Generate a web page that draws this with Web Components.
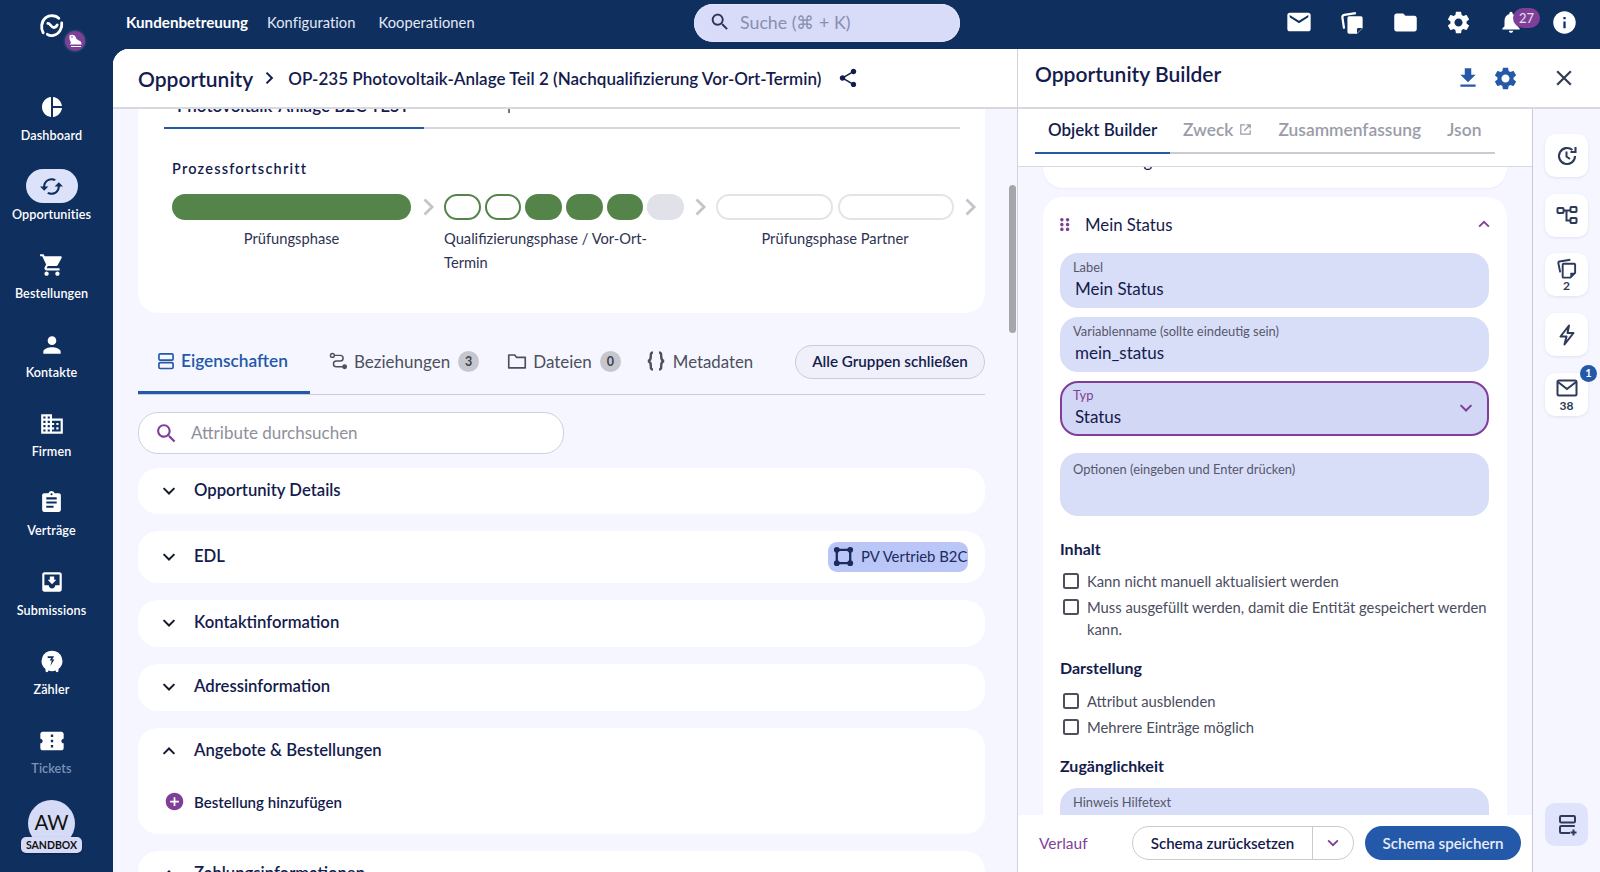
<!DOCTYPE html>
<html lang="de"><head><meta charset="utf-8"><title>Opportunity Builder</title>
<style>
html,body{margin:0;height:872px;overflow:hidden;background:#0f2f5f}
body{font-family:"Lato","Liberation Sans",sans-serif;color:#141b4d;-webkit-font-smoothing:antialiased}
</style></head><body>
<app-shell></app-shell>
<script>
const P={
mail:'M20 4H4c-1.1 0-1.99.9-1.99 2L2 18c0 1.1.9 2 2 2h16c1.1 0 2-.9 2-2V6c0-1.1-.9-2-2-2zm0 4l-8 5-8-5V6l8 5 8-5v2z',
folder:'M10 4H4c-1.1 0-1.99.9-1.99 2L2 18c0 1.1.9 2 2 2h16c1.1 0 2-.9 2-2V8c0-1.1-.9-2-2-2h-8l-2-2z',
gear:'M19.14 12.94c.04-.3.06-.61.06-.94 0-.32-.02-.64-.07-.94l2.03-1.58c.18-.14.23-.41.12-.61l-1.92-3.32c-.12-.22-.37-.29-.59-.22l-2.39.96c-.5-.38-1.03-.7-1.62-.94l-.36-2.54c-.04-.24-.24-.41-.48-.41h-3.84c-.24 0-.43.17-.47.41l-.36 2.54c-.59.24-1.13.57-1.62.94l-2.39-.96c-.22-.08-.47 0-.59.22L2.74 8.87c-.12.21-.08.47.12.61l2.03 1.58c-.05.3-.09.63-.09.94s.02.64.07.94l-2.03 1.58c-.18.14-.23.41-.12.61l1.92 3.32c.12.22.37.29.59.22l2.39-.96c.5.38 1.03.7 1.62.94l.36 2.54c.05.24.24.41.48.41h3.84c.24 0 .44-.17.47-.41l.36-2.54c.59-.24 1.13-.56 1.62-.94l2.39.96c.22.08.47 0 .59-.22l1.92-3.32c.12-.22.07-.47-.12-.61l-2.01-1.58zM12 15.6c-1.98 0-3.6-1.62-3.6-3.6s1.62-3.6 3.6-3.6 3.6 1.62 3.6 3.6-1.62 3.6-3.6 3.6z',
bell:'M12 22c1.1 0 2-.9 2-2h-4c0 1.1.89 2 2 2zm6-6v-5c0-3.07-1.64-5.64-4.5-6.32V4c0-.83-.67-1.5-1.5-1.5s-1.5.67-1.5 1.5v.68C7.63 5.36 6 7.92 6 11v5l-2 2v1h16v-1l-2-2z',
info:'M12 2C6.48 2 2 6.48 2 12s4.48 10 10 10 10-4.48 10-10S17.52 2 12 2zm1 15h-2v-6h2v6zm0-8h-2V7h2v2z',
search:'M15.5 14h-.79l-.28-.27C15.41 12.59 16 11.11 16 9.5 16 5.91 13.09 3 9.5 3S3 5.91 3 9.5 5.91 16 9.5 16c1.61 0 3.09-.59 4.23-1.57l.27.28v.79l5 4.99L20.49 19l-4.99-5zm-6 0C7.01 14 5 11.99 5 9.5S7.01 5 9.5 5 14 7.01 14 9.5 11.99 14 9.5 14z',
cart:'M7 18c-1.1 0-1.99.9-1.99 2S5.9 22 7 22s2-.9 2-2-.9-2-2-2zM1 2v2h2l3.6 7.59-1.35 2.45c-.16.28-.25.61-.25.96 0 1.1.9 2 2 2h12v-2H7.42c-.14 0-.25-.11-.25-.25l.03-.12.9-1.63h7.45c.75 0 1.41-.41 1.75-1.03l3.58-6.49c.08-.14.12-.31.12-.48 0-.55-.45-1-1-1H5.21l-.94-2H1zm16 16c-1.1 0-1.99.9-1.99 2s.89 2 1.99 2 2-.9 2-2-.9-2-2-2z',
person:'M12 12c2.21 0 4-1.79 4-4s-1.79-4-4-4-4 1.79-4 4 1.79 4 4 4zm0 2c-2.67 0-8 1.34-8 4v2h16v-2c0-2.66-5.33-4-8-4z',
domain:'M12 7V3H2v18h20V7H12zM6 19H4v-2h2v2zm0-4H4v-2h2v2zm0-4H4V9h2v2zm0-4H4V5h2v2zm4 12H8v-2h2v2zm0-4H8v-2h2v2zm0-4H8V9h2v2zm0-4H8V5h2v2zm10 12h-8v-2h2v-2h-2v-2h2v-2h-2V9h8v10zm-2-8h-2v2h2v-2zm0 4h-2v2h2v-2z',
assign:'M19 3h-4.18C14.4 1.84 13.3 1 12 1c-1.3 0-2.4.84-2.82 2H5c-1.1 0-2 .9-2 2v14c0 1.1.9 2 2 2h14c1.1 0 2-.9 2-2V5c0-1.1-.9-2-2-2zm-7 0c.55 0 1 .45 1 1s-.45 1-1 1-1-.45-1-1 .45-1 1-1zm2 14H7v-2h7v2zm3-4H7v-2h10v2zm0-4H7V7h10v2z',
inbox:'M19 3H4.99c-1.11 0-1.98.89-1.98 2L3 19c0 1.1.88 2 1.99 2H19c1.1 0 2-.9 2-2V5c0-1.11-.9-2-2-2zm0 12h-4c0 1.66-1.35 3-3 3s-3-1.34-3-3H4.99V5H19v10zm-3-5h-2V7h-4v3H8l4 4 4-4z',
ticket:'M22 10V6c0-1.11-.9-2-2-2H4c-1.1 0-1.99.89-1.99 2v4c1.1 0 1.99.9 1.99 2s-.89 2-2 2v4c0 1.1.9 2 2 2h16c1.1 0 2-.9 2-2v-4c-1.1 0-2-.9-2-2s.9-2 2-2zm-9 7.5h-2v-2h2v2zm0-4.5h-2v-2h2v2zm0-4.5h-2v-2h2v2z',
cached:'M19 8l-4 4h3c0 3.31-2.69 6-6 6-1.01 0-1.97-.25-2.8-.7l-1.46 1.46C8.97 19.54 10.43 20 12 20c4.42 0 8-3.58 8-8h3l-4-4zM6 12c0-3.31 2.69-6 6-6 1.01 0 1.97.25 2.8.7l1.46-1.46C15.03 4.46 13.57 4 12 4c-4.42 0-8 3.58-8 8H1l4 4 4-4H6z',
download:'M19 9h-4V3H9v6H5l7 7 7-7zM5 18v2h14v-2H5z',
close:'M19 6.41L17.59 5 12 10.59 6.41 5 5 6.41 10.59 12 5 17.59 6.41 19 12 13.41 17.59 19 19 17.59 13.41 12 19 6.41z',
share:'M18 16.08c-.76 0-1.44.3-1.96.77L8.91 12.7c.05-.23.09-.46.09-.7s-.04-.47-.09-.7l7.05-4.11c.54.5 1.25.81 2.04.81 1.66 0 3-1.34 3-3s-1.34-3-3-3-3 1.34-3 3c0 .24.04.47.09.7L8.04 9.81C7.5 9.31 6.79 9 6 9c-1.66 0-3 1.34-3 3s1.34 3 3 3c.79 0 1.5-.31 2.04-.81l7.12 4.16c-.05.21-.08.43-.08.65 0 1.61 1.31 2.92 2.92 2.92 1.61 0 2.92-1.31 2.92-2.92s-1.31-2.92-2.92-2.92z',
dashboard:'M11 2.05V21.95C5.9 21.45 2 17.2 2 12S5.9 2.55 11 2.05zM13 2.05C17.7 2.5 21.5 6.3 21.95 11H13V2.05zM13 13h8.95c-.45 4.7-4.25 8.5-8.95 8.95V13z',
plusc:'M12 2C6.48 2 2 6.48 2 12s4.48 10 10 10 10-4.48 10-10S17.52 2 12 2zm5 11h-4v4h-2v-4H7v-2h4V7h2v4h4v2z',
drag:'M9 4.5a2 2 0 1 1-.01 0zM15.5 4.5a2 2 0 1 1-.01 0zM9 10a2 2 0 1 1-.01 0zM15.5 10a2 2 0 1 1-.01 0zM9 15.5a2 2 0 1 1-.01 0zM15.5 15.5a2 2 0 1 1-.01 0z',
counter:'M12 2.5a9.5 9.5 0 0 1 6 16.9V21a1.3 1.3 0 0 1-2.6 0v-.2a9.6 9.6 0 0 1-6.8 0v.2A1.3 1.3 0 0 1 6 21v-1.6A9.5 9.5 0 0 1 12 2.5zM8 7.5v1.8h3.2L9.8 11.5h2l-1.3 5 3.7-6h-2l1.7-3z'
};
const S={
copyfill:'<path d="M4.5 17.5 3 7.5a2 2 0 0 1 1.7-2.3L15 3.6" fill="none" stroke="currentColor" stroke-width="2"/><path d="M9 6.5h10.5a1.5 1.5 0 0 1 1.5 1.5v9l-5 5H9a1.5 1.5 0 0 1-1.5-1.5V8A1.5 1.5 0 0 1 9 6.5z" fill="currentColor"/><path d="M16 21.5v-3.4a1.2 1.2 0 0 1 1.2-1.2h3.6z" fill="#0f2f5f"/>',
relation:'<circle cx="5" cy="5" r="2.2" fill="none" stroke="currentColor" stroke-width="1.6"/><path d="M7.2 5H14a3.2 3.2 0 0 1 0 6.5H9.5a3.2 3.2 0 0 0 0 6.5H17" fill="none" stroke="currentColor" stroke-width="1.7"/><circle cx="19" cy="18" r="2.8" fill="currentColor"/>',
rows:'<rect x="3.5" y="3.5" width="17" height="7.5" rx="1.5" fill="none" stroke="currentColor" stroke-width="2"/><rect x="3.5" y="14" width="17" height="7" rx="1.5" fill="none" stroke="currentColor" stroke-width="2"/>',
ofolder:'<path d="M3 5.5h6.5l2 2.500H21v11.500H3z" fill="none" stroke="currentColor" stroke-width="1.8" stroke-linejoin="round"/>',
braces:'<path d="M9 3.5C6.6 3.5 6.8 5 6.8 7.5c0 2.5-.3 4-2.8 4.5 2.5.5 2.8 2 2.8 4.5 0 2.5-.2 4 2.2 4M15 3.5c2.4 0 2.2 1.5 2.2 4 0 2.5.3 4 2.8 4.5-2.5.5-2.8 2-2.8 4.5 0 2.5.2 4-2.2 4" fill="none" stroke="currentColor" stroke-width="2.4"/>',
nodes:'<path d="M5 5h14M5 19h14M5 5v14M19 5v14" fill="none" stroke="currentColor" stroke-width="2.4"/><circle cx="5" cy="5" r="3" fill="currentColor"/><circle cx="19" cy="5" r="3" fill="currentColor"/><circle cx="5" cy="19" r="3" fill="currentColor"/><circle cx="19" cy="19" r="3" fill="currentColor"/>',
external:'<path d="M11 4.5H4.5v15h15V13M13.5 4.5h6v6M19.5 4.5 10 14" fill="none" stroke="currentColor" stroke-width="2"/>',
history:'<path d="M20 12a8 8 0 1 1-2.6-5.900" fill="none" stroke="currentColor" stroke-width="2.1"/><path d="M20.5 3v5h-5" fill="none" stroke="currentColor" stroke-width="2.1"/><path d="M11.5 7.500v5l3.500 2.500" fill="none" stroke="currentColor" stroke-width="2"/>',
tree:'<rect x="2.5" y="5" width="6" height="5" rx=".8" fill="none" stroke="currentColor" stroke-width="2"/><rect x="15.5" y="4" width="6" height="5" rx=".8" fill="none" stroke="currentColor" stroke-width="2"/><rect x="15.5" y="15" width="6" height="5" rx=".8" fill="none" stroke="currentColor" stroke-width="2"/><path d="M8.5 7.500h7M11.500 7.500v10h4" fill="none" stroke="currentColor" stroke-width="2"/>',
copyo:'<path d="M5.5 16 3.5 6.500a1.500 1.500 0 0 1 1.200-1.800L16 2.800" fill="none" stroke="currentColor" stroke-width="2"/><path d="M9 7h11a1 1 0 0 1 1 1v8.500L16 21.500H9a1 1 0 0 1-1-1V8a1 1 0 0 1 1-1z" fill="none" stroke="currentColor" stroke-width="2"/><path d="M16 21.500V17a.6.6 0 0 1 .6-.6H21z" fill="currentColor"/>',
bolt:'<path d="M14 2.500 5.500 13.500h6L9.500 21.500l9-11.500h-6z" fill="none" stroke="currentColor" stroke-width="2" stroke-linejoin="round"/>',
omail:'<rect x="2.5" y="4.5" width="19" height="15" rx="1.500" fill="none" stroke="currentColor" stroke-width="2"/><path d="M3 6l9 7 9-7" fill="none" stroke="currentColor" stroke-width="2"/>',
addrow:'<rect x="5" y="3" width="15" height="6.500" rx="1.200" fill="none" stroke="currentColor" stroke-width="2"/><path d="M19.800 13H6.200A1.200 1.200 0 0 0 5 14.200v4.600A1.200 1.200 0 0 0 6.200 20H15M18.500 16.500v6M15.500 19.500h6" fill="none" stroke="currentColor" stroke-width="2"/>',
down:'<path d="M5.500 8.500 12 15l6.500-6.500" fill="none" stroke="currentColor" stroke-width="2.4"/>',
up:'<path d="M5.500 15.500 12 9l6.500 6.500" fill="none" stroke="currentColor" stroke-width="2.4"/>',
right:'<path d="M9 5.500 15.500 12 9 18.500" fill="none" stroke="currentColor" stroke-width="2.4"/>',
logo:'<g fill="none" stroke="currentColor" stroke-width="2.7" stroke-linecap="round"><path d="M4 19C1.500 15 2 8 6.500 4.500 10 1.800 16 2 19 5"/><path d="M21.800 9.500c.8 5-2.300 10.800-8 12-2.200.5-4.300 0-5.800-1"/><path d="M8.500 10c2.200 0 2.600 2.500 4.500 3.500 1.800.8 3.600-.2 4.500-2"/></g>'
};
function def(name,css,html,extra){
  const tpl=document.createElement('template');
  tpl.innerHTML='<style>'+css+'</style>'+html;
  customElements.define(name,class extends HTMLElement{
    constructor(){super();this.attachShadow({mode:'open'}).appendChild(tpl.content.cloneNode(true));}
    connectedCallback(){if(extra)extra.call(this,this.shadowRoot);}
  });
}
def('x-icon',':host{display:inline-flex;flex:none;line-height:0}svg{display:block;overflow:visible}','<svg viewBox="0 0 24 24"></svg>',function(r){
  const n=this.getAttribute('name'),s=this.getAttribute('size')||24,v=r.querySelector('svg');
  v.setAttribute('width',s);v.setAttribute('height',s);
  v.innerHTML=P[n]?'<path fill="currentColor" d="'+P[n]+'"/>':(S[n]||'');
});
def('nav-item',`:host{display:flex;flex-direction:column;align-items:center;height:79.2px;width:103px;color:#fff;box-sizing:border-box;flex:none}
.i{width:52px;height:34px;display:flex;align-items:center;justify-content:center;border-radius:17px}
.l{font-size:12.600px;line-height:16px;font-weight:600;margin-top:3.500px;letter-spacing:.1px;white-space:nowrap}
:host([active]) .i{background:#dbe2fa;color:#0f2f5f}
:host([dim]) .l{color:#7d93b5}`,`<div class="i"><slot></slot></div><div class="l"></div>`,function(r){r.querySelector('.l').textContent=this.getAttribute('label');});
def('side-nav',`:host{display:flex;flex-direction:column;align-items:flex-start;grid-row:1/3;background:#0f2f5f;width:113px}
.logo{position:relative;height:49px;width:103px;color:#fff;margin-top:13px;margin-bottom:28px;flex:none}
.logo x-icon{margin-left:39px}
.logo .b{position:absolute;left:65px;top:18px;width:20px;height:20px;border-radius:50%;background:#7f3f98;box-shadow:0 0 3px rgba(255,255,255,.3)}
.logo svg{display:block}
.av{margin:-3px 0 0 28px;position:relative;width:47px;height:47px;border-radius:50%;background:#d5dbf7;color:#111;font-size:20.500px;display:flex;align-items:center;justify-content:center;padding-bottom:3px;box-sizing:border-box;flex:none}
.sb{position:absolute;left:-7px;top:37px;width:61px;height:16px;border-radius:5px;background:#d5dbf7;color:#111;font-size:10.500px;font-weight:700;display:flex;align-items:center;justify-content:center;box-shadow:0 1px 2px rgba(0,0,0,.3)}`,
`<div class="logo"><x-icon name="logo" size="25"></x-icon><div class="b"><svg viewBox="0 0 20 20" width="20" height="20"><path d="M4.500 4.500c2.200-1.500 5-1 6 1.200l1 2.300 4.500 2.800.5 2.700H4.500l1.500-1.500L4.500 8z" fill="#fff"/><circle cx="7" cy="6" r=".8" fill="#7f3f98"/><path d="M6 15.500h10" stroke="#fff" stroke-width="1"/></svg></div></div>
<nav-item label="Dashboard"><x-icon name="dashboard" size="24"></x-icon></nav-item>
<nav-item label="Opportunities" active><x-icon name="cached" size="25"></x-icon></nav-item>
<nav-item label="Bestellungen"><x-icon name="cart" size="26"></x-icon></nav-item>
<nav-item label="Kontakte"><x-icon name="person" size="26"></x-icon></nav-item>
<nav-item label="Firmen"><x-icon name="domain" size="26"></x-icon></nav-item>
<nav-item label="Verträge"><x-icon name="assign" size="25"></x-icon></nav-item>
<nav-item label="Submissions"><x-icon name="inbox" size="26"></x-icon></nav-item>
<nav-item label="Zähler"><x-icon name="counter" size="26"></x-icon></nav-item>
<nav-item label="Tickets" dim><x-icon name="ticket" size="28"></x-icon></nav-item>
<div class="av">AW<div class="sb">SANDBOX</div></div>`);
def('top-bar',`:host{display:flex;align-items:center;height:49px;background:#0f2f5f;color:#fff;padding:0 24px 5px 0;box-sizing:border-box}
.nav{display:flex;align-items:center;width:581px;padding-left:13px;box-sizing:border-box;font-size:14.700px}
.nav b{font-weight:700;width:141px;font-size:15.200px}.nav span{color:#e4e8f5;letter-spacing:.05px}.nav span:nth-child(2){width:111.500px}
.s{width:266px;height:38px;margin-top:1px;border-radius:19px;background:#d8dcf8;display:flex;align-items:center;padding:0 0 1px 15px;box-sizing:border-box;color:#8a8eb0;font-size:17.800px;gap:9px;box-shadow:0 0 0 1px #dfe3fb inset}
.s x-icon{color:#2b3257}
.r{margin-left:auto;display:flex;gap:29px;align-items:center}
.bell{position:relative;display:flex}
.badge{position:absolute;left:14px;top:-1px;width:27px;height:20px;border-radius:10px;background:#7f3f98;color:#e8e0f0;font-size:13px;display:flex;align-items:center;justify-content:center}`,
`<div class="nav"><b>Kundenbetreuung</b><span>Konfiguration</span><span>Kooperationen</span></div>
<div class="s"><x-icon name="search" size="22"></x-icon><span>Suche (⌘ + K)</span></div>
<div class="r"><x-icon name="mail" size="28" style="margin:0 -2px"></x-icon><x-icon name="copyfill" size="27" style="margin:0 -1.500px"></x-icon><x-icon name="folder" size="27" style="margin:0 -1.500px"></x-icon><x-icon name="gear" size="27" style="margin:0 -1.500px"></x-icon><div class="bell"><x-icon name="bell" size="26" style="margin:0 -1px"></x-icon><div class="badge">27</div></div><x-icon name="info" size="27" style="margin:0 -1.500px"></x-icon></div>`);
def('x-accordion',`:host{display:block;background:#fff;border-radius:20px;box-sizing:border-box;flex:none}
.h{display:flex;align-items:center;height:var(--hh,46px);padding:0 17px 0 21px;font-size:16.700px;font-weight:600;color:#141b4d}
.h x-icon{margin-right:15px;color:#141b2d}.t{flex:1;padding-bottom:2px}`,
`<div class="h"><div class="t"></div><slot name="aside"></slot></div><slot></slot>`,function(r){
  const ic=document.createElement('x-icon');ic.setAttribute('name',this.hasAttribute('open')?'up':'down');ic.setAttribute('size','20');
  const h=r.querySelector('.h');if(!h.querySelector('x-icon'))h.prepend(ic);
  r.querySelector('.t').textContent=this.getAttribute('label');
});
def('x-stage',`:host{display:block;flex:none;font-size:14.700px;line-height:24px;color:#2d3350}
.b{display:flex;height:25.500px}.l{margin-top:6px;text-align:var(--ta,center)}`,`<div class="b"><slot></slot></div><div class="l"></div>`,function(r){r.querySelector('.l').textContent=this.getAttribute('label');});
def('process-card',`:host{display:block;background:#fff;border-radius:0 0 20px 20px;margin-top:-20px;height:224px;padding:0 25px 0 26px;box-sizing:border-box;flex:none}
.tabs{display:flex;height:38px;border-bottom:2px solid #d4d6dd;box-sizing:content-box}
.t1{width:260px;box-sizing:border-box;height:40px;border-bottom:2px solid #2458a8;padding:6px 0 0 13px;font-size:17px;font-weight:600;color:#141b4d;white-space:nowrap}
.tick{width:2px;height:24px;background:#777;margin-left:84px}
.p{margin:32px 0 0 8px;font-size:14.500px;line-height:16px;font-weight:600;letter-spacing:1.200px;color:#141b4d}
.r{display:flex;margin:17px 0 0 8px;width:816px}
.c{width:33px;flex:none;height:26px;display:flex;align-items:center;justify-content:center;color:#c4c5cc}
.p1{flex:1 1 30px;border-radius:13px;background:#54844a}.o{flex:1 1 30px;border-radius:13px;border:2px solid #54844a;box-sizing:border-box}
.g{flex:1 1 30px;border-radius:13px;background:#e0e1e9}.e{flex:1 1 30px;border-radius:13px;border:2px solid #e3e4e9;box-sizing:border-box}
.gap{display:flex;gap:4px;width:100%}.gap2{display:flex;gap:5px;width:100%}`,
`<div class="tabs"><div class="t1">Photovoltaik-Anlage B2C TEST</div><div class="tick"></div></div>
<div class="p">Prozessfortschritt</div>
<div class="r">
<x-stage label="Prüfungsphase" style="width:239px"><div class="p1"></div></x-stage><div class="c"><x-icon name="right" size="28"></x-icon></div>
<x-stage label="Qualifizierungsphase / Vor-Ort-Termin" style="width:240px;--ta:left"><div class="gap"><div class="o"></div><div class="o"></div><div class="p1"></div><div class="p1"></div><div class="p1"></div><div class="g"></div></div></x-stage><div class="c" style="width:32px"><x-icon name="right" size="28"></x-icon></div>
<x-stage label="Prüfungsphase Partner" style="width:238px"><div class="gap2"><div class="e"></div><div class="e"></div></div></x-stage><div class="c" style="width:32px"><x-icon name="right" size="28"></x-icon></div>
</div>`);
def('tab-bar',`:host{display:flex;height:49px;margin-top:32px;border-bottom:1px solid #c9cbd9;font-size:17px;color:#4d4f5c;flex:none;box-sizing:content-box}
.t{display:flex;align-items:center;height:32px;gap:5px;flex:none}
.a{width:172px;height:49px;box-sizing:border-box;border-bottom:3px solid #2458a8;color:#2458a8;font-weight:600;padding:0 0 15px 18px;gap:5px;font-size:17.300px}
.n{width:21px;height:21px;border-radius:50%;background:#c6c7ce;font-size:12.500px;display:flex;align-items:center;justify-content:center;color:#3d3f4a;margin-left:3px;font-weight:700}
.btn{margin-left:auto;height:34px;width:190px;box-sizing:border-box;border:1px solid #c9cbd9;border-radius:17px;background:#eff0fa;display:flex;align-items:center;justify-content:center;font-size:15.200px;font-weight:600;color:#141b4d;padding-bottom:2px}`,
`<div class="t a"><x-icon name="rows" size="20"></x-icon>Eigenschaften</div>
<div class="t" style="margin-left:18px"><x-icon name="relation" size="21"></x-icon>Beziehungen<div class="n">3</div></div>
<div class="t" style="margin-left:27px"><x-icon name="ofolder" size="22"></x-icon>Dateien<div class="n">0</div></div>
<div class="t" style="margin-left:23px;font-size:16.800px"><x-icon name="braces" size="24"></x-icon>Metadaten</div>
<div class="btn">Alle Gruppen schließen</div>`);
def('attr-search',`:host{display:flex;align-items:center;width:426px;height:42px;box-sizing:border-box;margin-top:17px;border:1px solid #cfd1dc;border-radius:20px;background:#fff;padding:0 0 0 15px;gap:12px;color:#8e909b;font-size:17px;flex:none}
x-icon{color:#7f3f98}span{padding-bottom:2px}`,`<x-icon name="search" size="25"></x-icon><span>Attribute durchsuchen</span>`);
def('left-pane',`:host{display:flex;flex-direction:column;width:904px;flex:none;background:#fff;position:relative;overflow:hidden}
.hd{display:flex;align-items:center;height:60px;box-sizing:border-box;border-bottom:2px solid #d8d9de;padding-left:25px;background:#fff;flex:none;position:relative;z-index:1;color:#141b4d}
.o{font-size:21px;font-weight:600}.hd .ch{margin:0 9px 0 6px}.tt{font-size:17.050px;font-weight:600;width:533px;white-space:nowrap}
.sc{flex:1;overflow:hidden;background:#f5f6ff;padding:0 32px 0 25px;display:flex;flex-direction:column;min-height:0}
.ac{display:flex;flex-direction:column;gap:17px;margin-top:14px}
.chip{display:flex;align-items:center;background:#b9c6f7;border-radius:9px;height:30px;width:140px;box-sizing:border-box;padding:0 0 2px 4px;gap:3px;font-size:14.900px;color:#1c2a5c;white-space:nowrap;font-weight:400}
.chip x-icon{margin:1px 3px 0 0}
.add{display:flex;align-items:center;gap:9px;font-size:15.100px;font-weight:600;padding:17px 0 0 26px;color:#141b4d}.add x-icon{color:#7f3f98}
.thumb{position:absolute;left:896px;top:136px;width:7px;height:148px;border-radius:4px;background:#a5a6aa}`,
`<div class="hd"><span class="o">Opportunity</span><x-icon class="ch" name="right" size="20"></x-icon><span class="tt">OP-235 Photovoltaik-Anlage Teil 2 (Nachqualifizierung Vor-Ort-Termin)</span><x-icon name="share" size="22" style="margin-left:16px"></x-icon></div>
<div class="sc"><process-card></process-card><tab-bar></tab-bar><attr-search></attr-search>
<div class="ac">
<x-accordion label="Opportunity Details" style="height:46px"></x-accordion>
<x-accordion label="EDL" style="height:52px;--hh:52px"><div slot="aside" class="chip"><x-icon name="nodes" size="23"></x-icon>PV Vertrieb B2C</div></x-accordion>
<x-accordion label="Kontaktinformation" style="height:47px"></x-accordion>
<x-accordion label="Adressinformation" style="height:47px"></x-accordion>
<x-accordion label="Angebote &amp; Bestellungen" open style="height:106px"><div class="add"><x-icon name="plusc" size="21"></x-icon>Bestellung hinzufügen</div></x-accordion>
<x-accordion label="Zahlungsinformationen" open style="height:60px"></x-accordion>
</div></div><div class="thumb"></div>`);
def('x-field',`:host{display:block;position:relative;background:#d9def8;border-radius:18px;height:55px;box-sizing:border-box;padding:6px 13px 0;flex:none}
.l{font-size:12.900px;line-height:16px;color:#55586c}.v{font-size:17px;line-height:22px;color:#141b4d;margin:3px 0 0 2px}
:host([focus]){background:#d1d7f5;border:2px solid #7f3f98;padding:4px 11px 0}
:host([focus]) .l{color:#7f3f98}
x-icon{position:absolute;right:11px;top:15px;color:#7f3f98}`,`<div class="l"></div><div class="v"><slot></slot></div>`,function(r){
  r.querySelector('.l').textContent=this.getAttribute('label');
  if(this.hasAttribute('focus')&&!r.querySelector('x-icon')){const i=document.createElement('x-icon');i.setAttribute('name','down');i.setAttribute('size','20');r.appendChild(i);}
});
def('x-check',`:host{display:flex;gap:8px;font-size:14.800px;line-height:22px;color:#4a4d5e;padding-left:3px;flex:none}
i{width:16px;height:16px;border:2px solid #4d4f5c;border-radius:2.500px;box-sizing:border-box;flex:none;margin-top:3px;background:#fff}`,`<i></i><span><slot></slot></span>`);
def('schema-card',`:host{display:flex;flex-direction:column;background:#fff;border-radius:20px 20px 0 0;padding:0 18px 0 17px;margin-top:9px;box-sizing:border-box;flex:none}
.hd{display:flex;align-items:center;height:56px;box-sizing:border-box;padding-bottom:2px;font-size:16.800px;color:#141b4d;flex:none}
.hd x-icon.d{color:#7f3f98;margin:0 10px 0 -6px}.hd span{flex:1}.hd .u{color:#7f3f98;margin-right:-4px}
.fs{display:flex;flex-direction:column;gap:9px}
h4{margin:0;font-size:16px;line-height:18px;font-weight:700;color:#141b4d}
.i1{margin-top:24px}.i2{margin-top:19px}.cg{display:flex;flex-direction:column;gap:4px;margin-top:12px}`,
`<div class="hd"><x-icon class="d" name="drag" size="21"></x-icon><span>Mein Status</span><x-icon class="u" name="up" size="18"></x-icon></div>
<div class="fs"><x-field label="Label">Mein Status</x-field><x-field label="Variablenname (sollte eindeutig sein)">mein_status</x-field><x-field label="Typ" focus>Status</x-field></div>
<x-field label="Optionen (eingeben und Enter drücken)" style="height:63px;margin-top:17px;padding-top:8px"></x-field>
<h4 class="i1">Inhalt</h4><div class="cg"><x-check>Kann nicht manuell aktualisiert werden</x-check><x-check>Muss ausgefüllt werden, damit die Entität gespeichert werden kann.</x-check></div>
<h4 class="i2">Darstellung</h4><div class="cg" style="margin-top:13px"><x-check>Attribut ausblenden</x-check><x-check>Mehrere Einträge möglich</x-check></div>
<h4 class="i2">Zugänglichkeit</h4><x-field label="Hinweis Hilfetext" style="margin-top:13px"></x-field>`);
def('rail-btn',`:host{display:flex;flex-direction:column;align-items:center;justify-content:center;position:relative;width:43px;height:43px;border-radius:10px;background:#fff;box-shadow:0 1px 3px rgba(40,50,110,.1);color:#2e3a59;font-size:12px;line-height:12px;font-weight:700;flex:none}
:host([alt]){background:#dfe3fb;box-shadow:none}
.b{position:absolute;left:35px;top:-8px;width:17px;height:17px;border-radius:50%;background:#2458a8;color:#fff;font-size:11px;display:flex;align-items:center;justify-content:center}`,`<slot></slot>`,function(r){
  if(this.hasAttribute('badge')&&!r.querySelector('.b')){const b=document.createElement('div');b.className='b';b.textContent=this.getAttribute('badge');r.appendChild(b);}
});
def('right-pane',`:host{display:flex;flex-direction:column;flex:1;min-width:0;background:#fff;border-left:1px solid #d0d2dc;box-sizing:border-box}
.hd{display:flex;align-items:center;height:60px;box-sizing:border-box;border-bottom:2px solid #d8d9de;padding:0 23px 0 17px;flex:none}
.ti{font-size:21px;font-weight:600;flex:1;color:#141b4d;margin-top:-10px}.bl{color:#2458a8}
.body{display:flex;flex:1;min-height:0}
.bd{width:514px;display:flex;flex-direction:column;flex:none;min-height:0}
.tabs{height:57px;border-bottom:1px solid #d8d9de;flex:none;background:#fff;position:relative;z-index:1;box-sizing:content-box}
.tr{display:flex;height:43px;width:460px;margin-left:17px;border-bottom:2px solid #c9cdd3;font-size:17.400px;color:#9a9ca8;font-weight:600}
.tr div{padding-top:10px;height:43px;box-sizing:border-box;white-space:nowrap;display:flex;gap:5px}
.tr .a{width:135px;padding-left:13px;border-bottom:2px solid #2458a8;height:45px;color:#141b4d;font-size:17px}
.sc{flex:1;overflow:hidden;background:#f5f6ff;padding:0 25px;min-height:0}
.pv{height:40px;margin-top:-19px;box-sizing:border-box;background:#fff;border-radius:0 0 20px 20px;display:flex;align-items:flex-start;padding:2px 0 0 11px;font-size:16.800px;gap:10px;color:#141b4d;box-shadow:0 1px 2px rgba(40,50,110,.05)}
.pv x-icon{color:#7f3f98}
.ft{height:57px;flex:none;background:#fff;display:flex;align-items:flex-start;padding:11px 11px 0 21px;box-sizing:border-box;gap:11px}
.vl{font-size:15.500px;line-height:34px;color:#7f3f98;margin-right:auto}
.sp{display:flex;width:222px;height:34px;border:1px solid #c9cbd3;border-radius:17px;box-sizing:border-box;font-size:15.100px;font-weight:600;color:#141b4d;align-items:center}
.sp span{width:179px;text-align:center;border-right:1px solid #c9cbd3;line-height:32px;flex:none}.sp x-icon{color:#7f3f98;margin-left:11px}
.sv{width:156px;height:34px;border-radius:17px;background:#2458a8;color:#e8edf9;font-size:15.200px;font-weight:600;display:flex;align-items:center;justify-content:center}
.rail{flex:1;border-left:1px solid #c8cad8;background:#f5f6ff;display:flex;flex-direction:column;padding:25px 0 26px 12px;gap:16.700px}`,
`<div class="hd"><div class="ti">Opportunity Builder</div><x-icon class="bl" name="download" size="26" style="margin-right:11px"></x-icon><x-icon class="bl" name="gear" size="27" style="margin-right:32px"></x-icon><x-icon name="close" size="26" style="color:#333a55"></x-icon></div>
<div class="body"><div class="bd"><div class="tabs"><div class="tr"><div class="a">Objekt Builder</div><div style="margin-left:13px">Zweck<x-icon name="external" size="15" style="margin-top:3px"></x-icon></div><div style="margin-left:25px">Zusammenfassung</div><div style="margin-left:26px">Json</div></div></div>
<div class="sc"><div class="pv"><x-icon name="drag" size="21"></x-icon><span>Beratung</span></div><schema-card></schema-card></div>
<div class="ft"><div class="vl">Verlauf</div><div class="sp"><span>Schema zurücksetzen</span><x-icon name="down" size="18"></x-icon></div><div class="sv">Schema speichern</div></div></div>
<div class="rail"><rail-btn><x-icon name="history" size="24"></x-icon></rail-btn><rail-btn><x-icon name="tree" size="24"></x-icon></rail-btn><rail-btn><x-icon name="copyo" size="23"></x-icon>2</rail-btn><rail-btn><x-icon name="bolt" size="24"></x-icon></rail-btn><rail-btn badge="1"><x-icon name="omail" size="24"></x-icon>38</rail-btn><rail-btn alt style="margin-top:auto"><x-icon name="addrow" size="24"></x-icon></rail-btn></div></div>`);
def('app-shell',`:host{display:grid;grid-template-columns:113px 1fr;grid-template-rows:49px 823px;width:1600px;height:872px;background:#0f2f5f;overflow:hidden}
.w{display:flex;background:#fff;border-top-left-radius:16px;overflow:hidden;min-height:0}`,
`<side-nav></side-nav><top-bar></top-bar><div class="w"><left-pane></left-pane><right-pane></right-pane></div>`);
</script></body></html>
